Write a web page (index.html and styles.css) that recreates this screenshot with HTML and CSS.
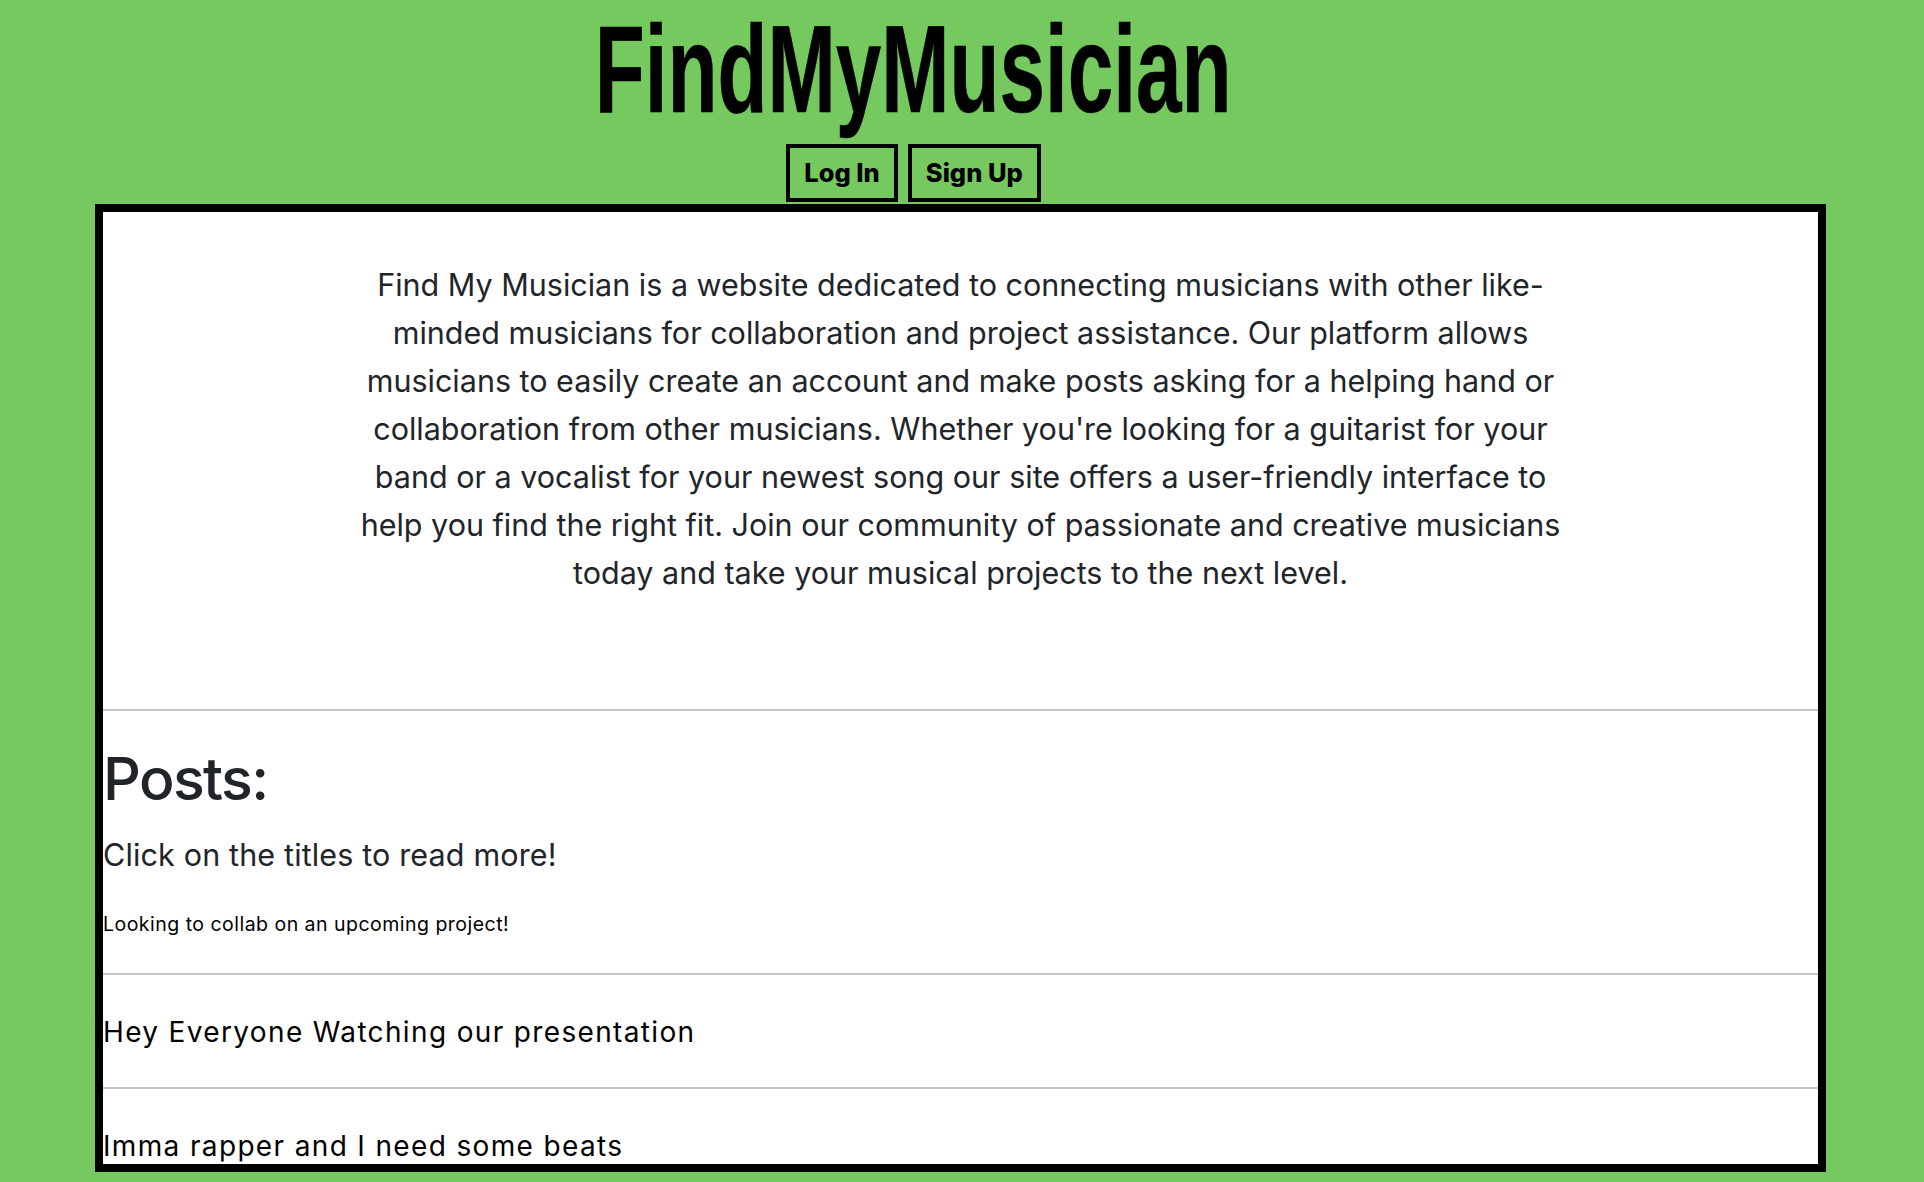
FILE: index.html
```html
<!DOCTYPE html>
<html lang="en">
<head>
<meta charset="utf-8">
<title>FindMyMusician</title>
<link rel="stylesheet" href="styles.css">
</head>
<body>
<header class="site-header">
  <h1 class="brand"><span class="brand-text">FindMyMusician</span></h1>
  <nav class="auth-nav">
    <a class="auth-btn" href="#">Log In</a>
    <a class="auth-btn" href="#">Sign Up</a>
  </nav>
</header>
<main class="panel">
  <p class="intro">Find My Musician is a website dedicated to connecting musicians with other like-<br>minded musicians for collaboration and project assistance. Our platform allows<br>musicians to easily create an account and make posts asking for a helping hand or<br>collaboration from other musicians. Whether you're looking for a guitarist for your<br>band or a vocalist for your newest song our site offers a user-friendly interface to<br>help you find the right fit. Join our community of passionate and creative musicians<br>today and take your musical projects to the next level.</p>
  <section class="posts">
    <h2 class="posts-title">Posts:</h2>
    <p class="posts-hint">Click on the titles to read more!</p>
    <div class="post post-first"><a class="post-link small" href="#">Looking to collab on an upcoming project!</a></div>
    <div class="post"><a class="post-link" href="#">Hey Everyone Watching our presentation</a></div>
    <div class="post"><a class="post-link" href="#">Imma rapper and I need some beats</a></div>
  </section>
</main>
</body>
</html>
```
FILE: styles.css
```css
* { box-sizing: border-box; }
html, body { margin: 0; padding: 0; }
body {
  background: #75c95e;
  height: 1182px;
  overflow: hidden;
  font-family: Inter, "Noto Sans", sans-serif;
  color: #212529;
}
.site-header {
  display: flex;
  flex-direction: column;
  align-items: center;
  padding-right: 97px;
}
.brand {
  margin: 0;
  padding-top: 6px;
  font-family: "Liberation Sans", Arial, sans-serif;
  font-weight: 700;
  font-size: 125px;
  line-height: 125px;
  height: 131px;
  color: #000;
}
.brand-text {
  display: inline-block;
  transform: scaleX(0.655);
  transform-origin: center;
  -webkit-text-stroke: 0.5px #000;
}
.auth-nav {
  display: flex;
  gap: 10px;
  margin-top: 13px;
}
.auth-btn {
  display: flex;
  align-items: center;
  justify-content: center;
  height: 58px;
  padding: 0 14px;
  border: 4px solid #000;
  color: #000;
  text-decoration: none;
  font-family: Inter, sans-serif;
  font-weight: 800;
  font-size: 25.5px;
  line-height: 30px;
}
.panel {
  margin: 2px 0 0 95px;
  width: 1731px;
  height: 968px;
  border: 8px solid #000;
  background: #fff;
  overflow: hidden;
}
.intro {
  margin: 49px 0 0;
  text-align: center;
  font-size: 30.5px;
  line-height: 48px;
  color: #212529;
}
.posts {
  margin-top: 112px;
  border-top: 2px solid #c6c6c6;
}
.posts-title {
  margin: 33px 0 0;
  font-size: 59px;
  font-weight: 500;
  letter-spacing: -1.6px;
  line-height: 1.2;
  color: #212529;
}
.posts-hint {
  margin: 17px 0 0;
  font-size: 30.5px;
  line-height: 1.5;
  letter-spacing: 0.15px;
  color: #212529;
}
.post {
  border-top: 2px solid #c6c6c6;
  padding: 36px 0 34px;
}
.post-first {
  border-top: 0;
  padding-top: 32px;
}
.post-link {
  color: #000;
  text-decoration: none;
  font-size: 28px;
  line-height: 42px;
  letter-spacing: 1.35px;
}
.post-link.small {
  font-size: 19.5px;
  line-height: 29px;
  letter-spacing: 0.48px;
}
```
